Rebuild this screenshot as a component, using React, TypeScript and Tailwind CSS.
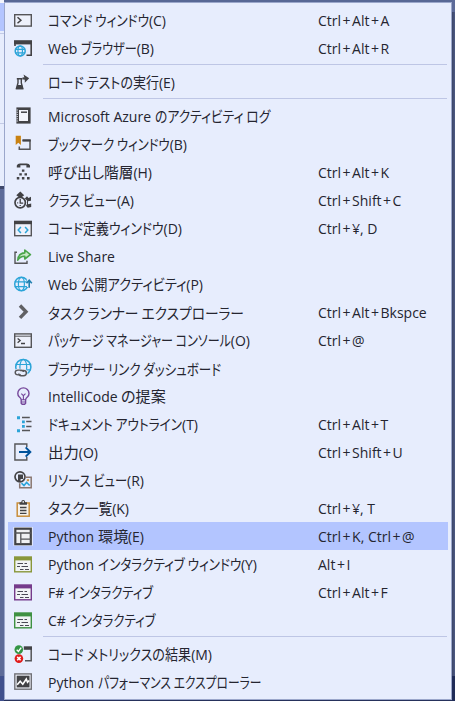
import { useLayoutEffect, useRef, type ReactNode } from 'react';

const G = '#555558';
const D = '#424245';
const B = '#2ba4d8';

function Globe({ x, y, r }: { x: number; y: number; r: number }) {
  return (
    <g fill="none" stroke={B} strokeWidth="1.2">
      <circle cx={x} cy={y} r={r} strokeWidth="1.5" />
      <ellipse cx={x} cy={y} rx={r * 0.45} ry={r} />
      <path d={`M${x - r} ${y - r * 0.33}H${x + r}M${x - r} ${y + r * 0.38}H${x + r}`} />
    </g>
  );
}

function Interactive({ c }: { c: string }) {
  return (
    <g>
      <rect x="0.7" y="2.2" width="16.6" height="14.6" fill="#f1f4f5" stroke={c} strokeWidth="1.4" />
      <path d="M0 1.6H18V5.4H0Z" fill={c} />
      <path d="M3.5 8.5H9M10.5 8.5H13M3 11.5H6M7.5 11.5H14M6 14.5H9.5M11 14.5H15" stroke="#4a4a55" strokeWidth="1.1" />
    </g>
  );
}

const icons: Record<string, ReactNode> = {
  command: (
    <g fill="none" stroke={G}>
      <rect x="0.7" y="3.7" width="16.6" height="11.4" strokeWidth="1.4" fill="#eef1fb" />
      <path d="M3.5 6.2 6.9 9.2 3.5 12.2" stroke={D} strokeWidth="1.5" />
    </g>
  ),
  browser: (
    <g>
      <path d="M0 1.2H18V5.4H0Z" fill={D} />
      <path d="M1 5V7M17.2 5V16.2H12.5" fill="none" stroke={D} strokeWidth="1.6" />
      <Globe x={6.2} y={12} r={5} />
    </g>
  ),
  load: (
    <g>
      <path d="M9.5 1.5 15.2 5.2 10.8 9.8V6.8L8.2 6.3 8.7 4.3 10.4 4.5Z" fill={D} />
      <path d="M2.8 5.8H8.3M4 6V10L2.4 15.5H8.8L7.3 10V6" fill="none" stroke={D} strokeWidth="1.4" />
      <path d="M3.3 12H8L9.3 16.3H2Z" fill={D} />
    </g>
  ),
  book: (
    <g>
      <rect x="3.7" y="1.7" width="11.6" height="13.6" fill="#f3f4fa" stroke={D} strokeWidth="2.6" />
      <path d="M7 5.2H13" stroke={D} strokeWidth="1.5" />
      <path d="M3.2 2.5V15" stroke="#dfe3f0" strokeWidth="1.2" strokeDasharray="1 1.2" />
    </g>
  ),
  bookmark: (
    <g>
      <path d="M8.5 5.6H16V14.2H5.3V11.5" fill="none" stroke={G} strokeWidth="1.5" />
      <path d="M8.5 5.4H16.7" stroke={D} strokeWidth="2.2" />
      <path d="M1.7 .8H6.9V10L4.3 7.8 1.7 10Z" fill="#c98212" />
    </g>
  ),
  phone: (
    <g fill={D}>
      <path d="M2.8 4.5V2.4Q3.6.4 6 .4H12.8Q15.2.4 16 2.4V4.5H12.4V2.3H6.4V4.5Z" />
      <path d="M7.9 6.6h2.5v2.2H7.9ZM5.3 10.2h2.5v2.2H5.3ZM10.5 10.2H13v2.2h-2.5ZM2.8 14.1h2.5v2.3H2.8ZM7.9 14.1h2.5v2.3H7.9ZM13 14.1h2.6v2.3H13Z" />
    </g>
  ),
  classview: (
    <g>
      <path d="M6.3.6 10.2 4.3 6.3 7.2 2.3 4.3Z" fill={D} />
      <circle cx="6.2" cy="11.6" r="5.2" fill="#e8edfd" stroke={D} strokeWidth="1.7" />
      <path d="M6.2 8V12.1H9.2M3.2 11.8h1M6.2 14v1" fill="none" stroke={D} strokeWidth="1.3" />
      <path d="M10.8 7.4 13 5.3 14.5 7 17 5.8V9.7L14 10.2V13.2L17.2 12.6V16L13.7 16.7 12 14.8 13 13V9.5Z" fill={D} />
    </g>
  ),
  codedef: (
    <g>
      <rect x="0.7" y="2.7" width="16.6" height="14" fill="#eef1fb" stroke={G} strokeWidth="1.4" />
      <path d="M0 1.7H18V5.2H0Z" fill={D} />
      <path d="M6.9 8 4.2 11 6.9 14M11.1 8 13.8 11 11.1 14" fill="none" stroke={B} strokeWidth="1.5" />
    </g>
  ),
  share: (
    <g fill="none">
      <path d="M3 5.2H1V16.2H13V13.8" stroke={G} strokeWidth="1.4" />
      <path d="M3.8 13.2Q4.2 6.3 10.8 5.9V3L16.4 7.7 10.8 12V9.3Q6.2 9.1 3.8 13.2Z" fill="#c9e9c7" stroke="#4aa44a" strokeWidth="1.6" strokeLinejoin="round" />
    </g>
  ),
  publish: (
    <g>
      <Globe x={7.4} y={9} r={6.7} />
      <path d="M12.7 4.2H18V12H13Z" fill="#e7edfd" />
      <path d="M15.2 12.7V5.5M12.5 8.2 15.2 5.2 17.8 8.2" fill="none" stroke="#1f7fae" strokeWidth="1.6" />
    </g>
  ),
  chevron: <path d="M6 2.5 12 8.7 6 14.9" fill="none" stroke="#606064" strokeWidth="3.4" />,
  console: (
    <g fill="none" stroke={G}>
      <rect x="0.7" y="2.9" width="16.6" height="13.4" strokeWidth="1.4" fill="#eef1fb" />
      <path d="M1 5.2H17" strokeWidth="1" />
      <path d="M3.6 7.5 6.2 9.6 3.6 11.8M7 12.5H11" stroke={D} strokeWidth="1.3" />
    </g>
  ),
  link: (
    <g>
      <Globe x={9.3} y={8} r={7.6} />
      <rect x="0" y="9.7" width="13.5" height="8.3" rx="4" fill="#e7edfd" />
      <path d="M7 15.9H4Q1.2 15.9 1.2 13.5T4 11.1H7Q9.3 11.1 9.3 13M6.2 11.5H9.5Q12.4 11.5 12.4 14T9.5 16.8H7Q4.8 16.8 4.8 14.5" fill="none" stroke={G} strokeWidth="1.4" />
    </g>
  ),
  bulb: (
    <g fill="none" stroke="#76489b" strokeWidth="1.4">
      <path d="M7.2 12.6Q7 11.3 5.2 9.8 3.8 8.4 3.8 6.5A5.6 5.6 0 0 1 15 6.5Q15 8.4 13.6 9.8 11.8 11.3 11.6 12.6V16.2L10.6 17.3H8.2L7.2 16.2Z" />
      <path d="M7.2 12.8H11.6M7.2 15H11.6M9.4 12.5V8.7M7.3 6.6 9.4 8.7 11.5 6.6" strokeWidth="1.1" />
    </g>
  ),
  outline: (
    <g>
      <path d="M3 1.2h3v3H3ZM8 5.5h2.8v2.8H8ZM8 10h2.8v2.8H8ZM3 14.2h3v3H3Z" fill={B} />
      <path d="M8 2.5H15.8M12.2 6.5H17.5M12.2 11.5H17.5M8 15.5H16" stroke={G} strokeWidth="1.5" />
    </g>
  ),
  output: (
    <g fill="none">
      <path d="M12.8 4V1H.9V17H12.8V14" stroke={G} strokeWidth="1.4" />
      <path d="M5 9H16M11.7 4.4 16.3 9 11.7 13.6" stroke="#00539c" strokeWidth="2" />
    </g>
  ),
  resource: (
    <g fill="none">
      <circle cx="6" cy="5.8" r="5" stroke={D} strokeWidth="1.7" />
      <path d="M4 3.5H9V8H6.6V10H4Z" fill={D} />
      <path d="M10.8 6.3H17.2V16.8H5.7V12.3" stroke="#8a7770" strokeWidth="1.5" />
      <path d="M7.5 12.2 10 14.5 12.6 11.5 15.7 14.5" stroke={B} strokeWidth="1.6" />
      <path d="M12.8 8.2h2.3v2h-2.3Z" fill="#c98f43" />
    </g>
  ),
  clipboard: (
    <g>
      <rect x="3.2" y="4" width="12" height="13.2" fill="#f4f2ef" stroke="#c88d3b" strokeWidth="1.5" />
      <path d="M5.5 5.8V3.3H7.2Q7.3 1 9.2 1T11.2 3.3H13V5.8Z" fill={D} />
      <circle cx="9.2" cy="2.9" r=".8" fill="#fff" />
      <path d="M6 8.5H12.5M6 11.5H12.5M6 14.3H12.5" stroke={D} strokeWidth="1.3" />
    </g>
  ),
  python: (
    <g>
      <path d="M-.5 0H18.7V18.7H-.5Z" fill="#f2f4fb" />
      <rect x="1.3" y="1.7" width="15.5" height="15.5" fill="#f1f1f3" stroke={D} strokeWidth="2.2" />
      <path d="M1 6H17M6.8 6V17M7 12.2H17" stroke={G} strokeWidth="1.3" />
    </g>
  ),
  pyint: <Interactive c="#89973a" />,
  fsint: <Interactive c="#753b8b" />,
  csint: <Interactive c="#3f9142" />,
  metrics: (
    <g fill="none">
      <path d="M10.3 3H17.2V15.7H11" stroke={G} strokeWidth="1.5" />
      <path d="M9.8 1.3H18V4.8H9.8Z" fill={D} />
      <circle cx="4.8" cy="4.6" r="4.3" fill="#339544" />
      <path d="M2.7 4.7 4.4 6.4 7.2 2.6" stroke="#fff" strokeWidth="1.4" />
      <circle cx="4.9" cy="13.6" r="4.3" fill="#e01b1b" />
      <path d="M3.2 11.9 6.6 15.3M6.6 11.9 3.2 15.3" stroke="#fff" strokeWidth="1.5" />
    </g>
  ),
  perf: (
    <g>
      <rect x="0.8" y="0.9" width="16.5" height="15.3" fill="#eef1f8" stroke="#707076" strokeWidth="1.4" />
      <path d="M2.7 2.7H15.5V14.4H2.7Z" fill={D} />
      <path d="M3.2 11.8 6.2 8.2 8.8 11.2 12.3 6 13.5 9.2 15.2 7.5" fill="none" stroke="#fff" strokeWidth="1.6" />
    </g>
  ),
};

type Item = { icon: string; label: string; width: number; keys?: string; selected?: boolean };

const groups: Item[][] = [
  [
    { icon: 'command', label: 'コマンド ウィンドウ(C)', width: 118, keys: 'Ctrl+Alt+A' },
    { icon: 'browser', label: 'Web ブラウザー(B)', width: 106, keys: 'Ctrl+Alt+R' },
  ],
  [{ icon: 'load', label: 'ロード テストの実行(E)', width: 127 }],
  [
    { icon: 'book', label: 'Microsoft Azure のアクティビティ ログ', width: 222 },
    { icon: 'bookmark', label: 'ブックマーク ウィンドウ(B)', width: 139 },
    { icon: 'phone', label: '呼び出し階層(H)', width: 104, keys: 'Ctrl+Alt+K' },
    { icon: 'classview', label: 'クラス ビュー(A)', width: 86, keys: 'Ctrl+Shift+C' },
    { icon: 'codedef', label: 'コード定義ウィンドウ(D)', width: 134, keys: 'Ctrl+¥, D' },
    { icon: 'share', label: 'Live Share', width: 67 },
    { icon: 'publish', label: 'Web 公開アクティビティ(P)', width: 155 },
    { icon: 'chevron', label: 'タスク ランナー エクスプローラー', width: 196, keys: 'Ctrl+Alt+Bkspce' },
    { icon: 'console', label: 'パッケージ マネージャー コンソール(O)', width: 202, keys: 'Ctrl+@' },
    { icon: 'link', label: 'ブラウザー リンク ダッシュボード', width: 173 },
    { icon: 'bulb', label: 'IntelliCode の提案', width: 118 },
    { icon: 'outline', label: 'ドキュメント アウトライン(T)', width: 150, keys: 'Ctrl+Alt+T' },
    { icon: 'output', label: '出力(O)', width: 50, keys: 'Ctrl+Shift+U' },
    { icon: 'resource', label: 'リソース ビュー(R)', width: 96 },
    { icon: 'clipboard', label: 'タスク一覧(K)', width: 81, keys: 'Ctrl+¥, T' },
    { icon: 'python', label: 'Python 環境(E)', width: 96, keys: 'Ctrl+K, Ctrl+@', selected: true },
    { icon: 'pyint', label: 'Python インタラクティブ ウィンドウ(Y)', width: 209, keys: 'Alt+I' },
    { icon: 'fsint', label: 'F# インタラクティブ', width: 105, keys: 'Ctrl+Alt+F' },
    { icon: 'csint', label: 'C# インタラクティブ', width: 107 },
  ],
  [
    { icon: 'metrics', label: 'コード メトリックスの結果(M)', width: 164 },
    { icon: 'perf', label: 'Python パフォーマンス エクスプローラー', width: 213 },
  ],
];

// Condenses the Japanese runs so that the whole label takes the given width.
function Label({ text, width }: { text: string; width: number }) {
  const ref = useRef<HTMLSpanElement>(null);
  useLayoutEffect(() => {
    const root = ref.current;
    if (!root) return;
    const runs = Array.from(root.querySelectorAll<HTMLElement>('[data-ja]'));
    runs.forEach((el) => {
      el.style.marginRight = '';
      el.style.transform = '';
    });
    const widths = runs.map((el) => el.getBoundingClientRect().width);
    const ja = widths.reduce((a, b) => a + b, 0);
    if (!ja) return;
    const k = (width - (root.getBoundingClientRect().width - ja)) / ja;
    runs.forEach((el, i) => {
      el.style.transform = `scaleX(${k})`;
      el.style.marginRight = `${widths[i] * (k - 1)}px`;
    });
  }, [text, width]);
  const parts = text.split(/([\u3000-\u9fff]+(?: [\u3000-\u9fff]+)*)/).filter(Boolean);
  return (
    <span ref={ref} className="inline-flex items-baseline whitespace-pre">
      {parts.map((p, i) =>
        /[\u3000-\u9fff]/.test(p) ? (
          <span
            key={i}
            data-ja=""
            className="inline-block shrink-0 origin-left font-['Noto_Sans_CJK_JP',sans-serif] text-[15px] leading-7 font-normal [font-feature-settings:'palt']"
          >
            {p}
          </span>
        ) : (
          <span key={i} className="shrink-0">{p}</span>
        ),
      )}
    </span>
  );
}

function Keys({ text }: { text: string }) {
  return (
    <span className="whitespace-pre pt-px leading-7">
      {text.split('+').map((part, i) => (
        <span key={i}>
          {i > 0 && <span className="mx-[1.5px]">+</span>}
          {part}
        </span>
      ))}
    </span>
  );
}

function Row({ item }: { item: Item }) {
  return (
    <div className={`flex h-7 w-[440px] items-center pl-1.5 ${item.selected ? 'bg-[#b3c5ff]' : ''}`}>
      <svg className="h-[18px] w-[18px] shrink-0 overflow-visible" viewBox="0 0 18 18">
        {icons[item.icon]}
      </svg>
      <div className="ml-4 flex h-7 w-[270px] shrink-0 items-center pt-px leading-7">
        <Label text={item.label} width={item.width} />
      </div>
      {item.keys && <Keys text={item.keys} />}
    </div>
  );
}

export default function App() {
  return (
    <div className="flex h-[701px] w-[455px] overflow-hidden bg-[#5d6b99] font-['Open_Sans','Noto_Sans_CJK_JP',sans-serif] text-[14px] text-[#252530]">
      <div className="flex w-1 shrink-0 flex-col">
        <div className="h-[3px] bg-[#f2f4fc]" />
        <div className="h-7 bg-[#b3c5ff]" />
        <div className="h-[2px] bg-[#e7edfd]" />
        <div className="h-px bg-[#c3cbe6]" />
        <div className="h-[89px] bg-[#e7edfd]" />
        <div className="h-px bg-[#c3cbe6]" />
        <div className="h-[62px] bg-[#e7edfd]" />
        <div className="h-[3px] bg-[#3e486b]" />
        <div className="h-[487px] bg-[#5d6b99]" />
        <div className="grow bg-[#40508d]" />
      </div>
      <div className="flex w-[448px] shrink-0 flex-col">
        <div className="h-0.5 bg-[#586895]" />
        <div className="h-[698px] border border-[#9ba7cb] bg-[#e7edfd] pl-[3px] pt-[3px]">
          {groups.map((g, i) => (
            <div key={i}>
              {i > 0 && (
                <div className="h-1.5 pt-0.5">
                  <div className="ml-[35px] h-px w-[404px] bg-[#bec6e5]" />
                </div>
              )}
              {g.map((item) => (
                <Row key={item.icon} item={item} />
              ))}
            </div>
          ))}
        </div>
        <div className="grow bg-[#26325c]" />
      </div>
      <div className="flex grow flex-col">
        <div className="h-3 bg-[#5d6b99]" />
        <div className="h-[664px] bg-linear-to-r from-[#3b4568] to-[#4d5a84]" />
        <div className="grow bg-[#202c58]" />
      </div>
    </div>
  );
}
